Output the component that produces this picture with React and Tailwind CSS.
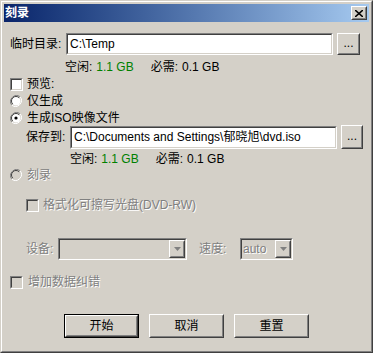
import React from 'react';

const dis = 'text-[#808080] [text-shadow:1px_1px_0_#fff]';

function Sunken({ className = '', bg = 'bg-white', children }) {
  return (
    <div className={`border border-t-[#808080] border-l-[#808080] border-b-white border-r-white ${className}`}>
      <div className={`h-full w-full border border-t-[#404040] border-l-[#404040] border-b-[#d4d0c8] border-r-[#d4d0c8] ${bg}`}>
        {children}
      </div>
    </div>
  );
}

function Raised({ className = '', children }) {
  return (
    <div className={`border border-t-white border-l-white border-b-[#404040] border-r-[#404040] ${className}`}>
      <div className="h-full w-full border border-t-[#d4d0c8] border-l-[#d4d0c8] border-b-[#808080] border-r-[#808080] bg-[#d4d0c8] flex items-center justify-center">
        {children}
      </div>
    </div>
  );
}

function Check({ disabled }) {
  return <Sunken className="w-[13px] h-[13px] shrink-0" bg={disabled ? 'bg-[#d4d0c8]' : 'bg-white'} />;
}

function Radio({ checked, disabled }) {
  return (
    <svg width="12" height="12" viewBox="0 0 12 12" className="shrink-0">
      <path d="M10.2 1.8A6 6 0 0 0 1.8 10.2" stroke="#808080" fill="none" />
      <path d="M1.8 10.2A6 6 0 0 0 10.2 1.8" stroke="#fff" fill="none" />
      <circle cx="6" cy="6" r="4.5" fill={disabled ? '#d4d0c8' : '#fff'} />
      <path d="M9.2 2.8A4.5 4.5 0 0 0 2.8 9.2" stroke="#404040" fill="none" />
      {checked && <circle cx="6" cy="6" r="1.6" fill="#000" />}
    </svg>
  );
}

function Dots() {
  return <span className="text-[12px] leading-none -mt-[3px]">...</span>;
}

function Arrow() {
  return (
    <svg width="7" height="4" viewBox="0 0 7 4">
      <path d="M0 0h7L3.5 4z" fill="#808080" />
    </svg>
  );
}

export default function App() {
  return (
    <div className="w-[373px] h-[353px] bg-[#d4d0c8] border border-t-[#d4d0c8] border-l-[#d4d0c8] border-b-[#404040] border-r-[#404040] font-['Liberation_Sans','Noto_Sans_CJK_SC',sans-serif] text-[12px] text-black overflow-hidden">
      <div className="h-full w-full border border-t-white border-l-white border-b-[#808080] border-r-[#808080] p-[2px] flex flex-col">
        {/* Title bar */}
        <div className="h-[18px] shrink-0 bg-gradient-to-r from-[#0a246a] to-[#a6caf0] flex items-center justify-between pl-[1px] pr-[2px]">
          <span className="text-white font-bold text-[12px]">刻录</span>
          <Raised className="w-[16px] h-[14px]">
            <svg width="8" height="7" viewBox="0 0 8 7">
              <path d="M0 0l8 7M8 0L0 7" stroke="#000" strokeWidth="1.6" />
            </svg>
          </Raised>
        </div>

        <div className="flex flex-col pl-[6px] pr-[5px]">
          {/* Temp dir */}
          <div className="mt-[11px] h-[22px] flex items-center">
            <span className="w-[56px]">临时目录:</span>
            <Sunken className="w-[267px] h-[22px]">
              <div className="pl-[2px] leading-[18px]">C:\Temp</div>
            </Sunken>
            <Raised className="ml-[4px] w-[23px] h-[22px]"><Dots /></Raised>
          </div>

          <div className="mt-[5px] h-[14px] flex items-center pl-[55px] leading-none">
            <span>空闲:</span>
            <span className="ml-[4px] text-[#008000]">1.1 GB</span>
            <span className="ml-[17px]">必需:</span>
            <span className="ml-[4px]">0.1 GB</span>
          </div>

          <div className="mt-[2px] h-[16px] flex items-center gap-[4px]">
            <Check />
            <span>预览:</span>
          </div>

          <div className="mt-[1px] h-[16px] flex items-center gap-[5px]">
            <Radio />
            <span>仅生成</span>
          </div>
          <div className="mt-[2px] h-[14px] flex items-center gap-[5px]">
            <Radio checked />
            <span>生成ISO映像文件</span>
          </div>

          {/* Save to */}
          <div className="h-[24px] flex items-center pl-[16px]">
            <span className="w-[44px]">保存到:</span>
            <Sunken className="w-[267px] h-[23px]">
              <div className="pl-[2px] leading-[19px] whitespace-nowrap">C:\Documents and Settings\郁晓旭\dvd.iso</div>
            </Sunken>
            <Raised className="ml-[4px] w-[22px] h-[24px]"><Dots /></Raised>
          </div>

          <div className="mt-[3px] h-[14px] flex items-center pl-[60px] leading-none">
            <span>空闲:</span>
            <span className="ml-[4px] text-[#008000]">1.1 GB</span>
            <span className="ml-[17px]">必需:</span>
            <span className="ml-[4px]">0.1 GB</span>
          </div>

          <div className="mt-[2px] h-[14px] flex items-center gap-[5px]">
            <Radio disabled />
            <span className={dis}>刻录</span>
          </div>

          <div className="mt-[16px] h-[14px] flex items-center gap-[4px] pl-[16px]">
            <Check disabled />
            <span className={dis}>格式化可擦写光盘(DVD-RW)</span>
          </div>

          {/* Device / speed */}
          <div className="mt-[26px] h-[22px] flex items-center pl-[16px]">
            <span className={`w-[32px] ${dis}`}>设备:</span>
            <Sunken className="w-[129px] h-[22px]" bg="bg-[#d4d0c8]">
              <div className="h-full flex justify-end">
                <Raised className="w-[16px] h-full"><Arrow /></Raised>
              </div>
            </Sunken>
            <span className={`ml-[12px] w-[41px] ${dis}`}>速度:</span>
            <Sunken className="w-[53px] h-[22px]" bg="bg-[#d4d0c8]">
              <div className="h-full flex justify-between">
                <span className={`pl-[1px] leading-[18px] ${dis}`}>auto</span>
                <Raised className="w-[16px] h-full"><Arrow /></Raised>
              </div>
            </Sunken>
          </div>

          <div className="mt-[15px] h-[14px] flex items-center gap-[5px]">
            <Check disabled />
            <span className={dis}>增加数据纠错</span>
          </div>

          {/* Buttons */}
          <div className="mt-[25px] h-[24px] flex pl-[54px] gap-[10px]">
            <div className="border border-black w-[75px] h-[24px]">
              <Raised className="w-full h-full">开始</Raised>
            </div>
            <Raised className="w-[75px] h-[24px]">取消</Raised>
            <Raised className="w-[75px] h-[24px]">重置</Raised>
          </div>
        </div>
      </div>
    </div>
  );
}
